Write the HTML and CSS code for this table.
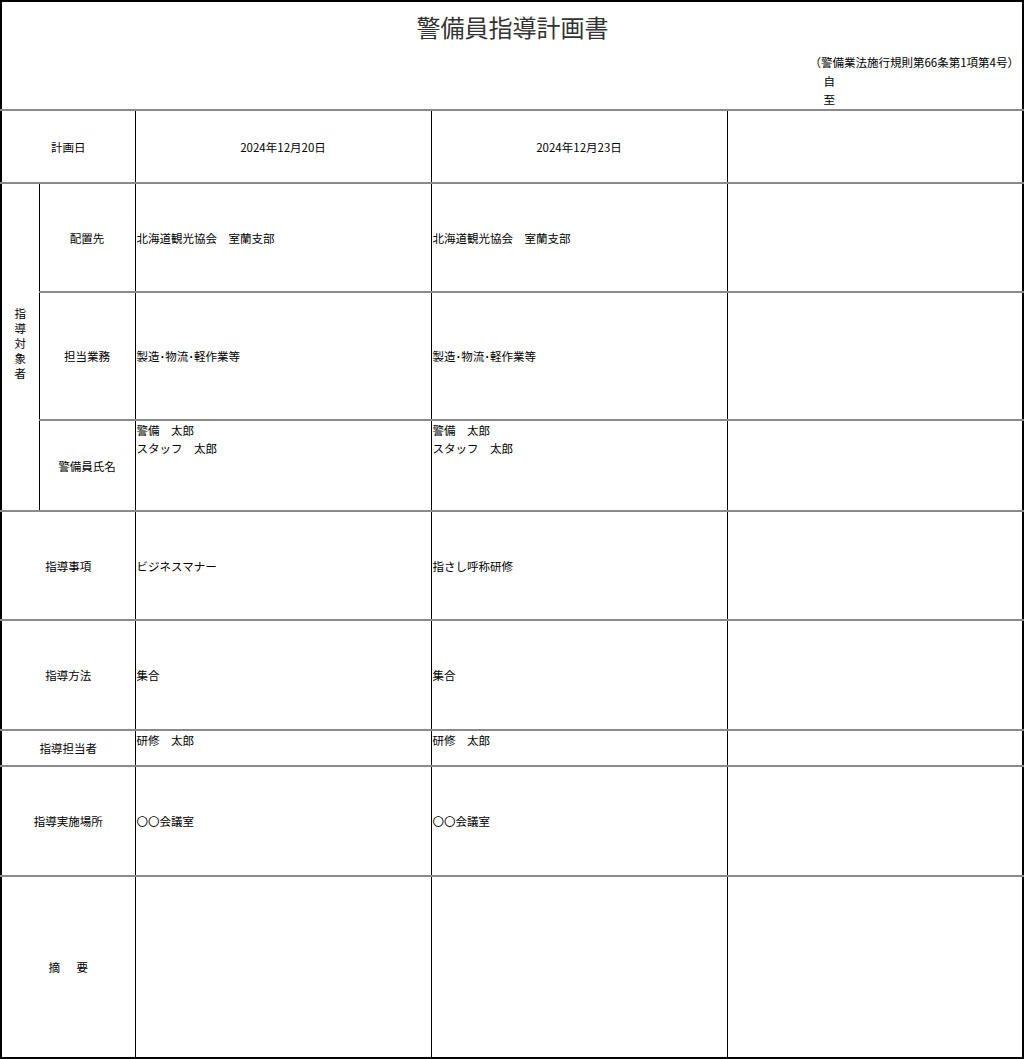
FILE: index.html
```html
<!DOCTYPE html>
<html lang="ja">
<head>
<meta charset="utf-8">
<title>警備員指導計画書</title>
<link rel="stylesheet" href="styles.css">
</head>
<body>
<table class="sheet">
  <colgroup>
    <col class="c-group">
    <col class="c-label">
    <col class="c-data">
    <col class="c-data">
    <col class="c-data">
  </colgroup>
  <tr class="r-head">
    <td colspan="5" class="head">
      <div class="title">警備員指導計画書</div>
      <div class="note-wrap">
        <div class="note">
          <div class="law">（警備業法施行規則第66条第1項第4号）</div>
          <div class="period">自</div>
          <div class="period last">至</div>
        </div>
      </div>
    </td>
  </tr>
  <tr class="r-date">
    <td colspan="2" class="label">計画日</td>
    <td class="center">2024年12月20日</td>
    <td class="center">2024年12月23日</td>
    <td></td>
  </tr>
  <tr class="r-place">
    <td rowspan="3" class="group"><span class="vert">指導対象者</span></td>
    <td class="label">配置先</td>
    <td>北海道観光協会　室蘭支部</td>
    <td>北海道観光協会　室蘭支部</td>
    <td></td>
  </tr>
  <tr class="r-duty">
    <td class="label">担当業務</td>
    <td>製造･物流･軽作業等</td>
    <td>製造･物流･軽作業等</td>
    <td></td>
  </tr>
  <tr class="r-names">
    <td class="label">警備員氏名</td>
    <td class="top">警備　太郎<br>スタッフ　太郎</td>
    <td class="top">警備　太郎<br>スタッフ　太郎</td>
    <td></td>
  </tr>
  <tr class="r-item">
    <td colspan="2" class="label">指導事項</td>
    <td>ビジネスマナー</td>
    <td>指さし呼称研修</td>
    <td></td>
  </tr>
  <tr class="r-method">
    <td colspan="2" class="label">指導方法</td>
    <td>集合</td>
    <td>集合</td>
    <td></td>
  </tr>
  <tr class="r-staff">
    <td colspan="2" class="label">指導担当者</td>
    <td class="top">研修　太郎</td>
    <td class="top">研修　太郎</td>
    <td></td>
  </tr>
  <tr class="r-venue">
    <td colspan="2" class="label">指導実施場所</td>
    <td>〇〇会議室</td>
    <td>〇〇会議室</td>
    <td></td>
  </tr>
  <tr class="r-memo">
    <td colspan="2" class="label">摘 　 要</td>
    <td></td>
    <td></td>
    <td></td>
  </tr>
</table>
</body>
</html>
```
FILE: styles.css
```css
html, body {
  margin: 0;
  padding: 0;
  background: #fff;
}
body {
  font-family: "Noto Sans CJK JP", "Liberation Sans", sans-serif;
  font-size: 11.5px;
  color: #000;
}
.sheet {
  border-collapse: collapse;
  table-layout: fixed;
  width: 1023px;
  border: 2px solid #000;
}
.c-group { width: 38px; }
.c-label { width: 96px; }
.c-data { width: 296px; }
.sheet td {
  border-left: 1px solid #000;
  border-right: 1px solid #000;
  border-top: 2px solid #8a8a8a;
  border-bottom: 2px solid #8a8a8a;
  padding: 0 0 0 1px;
  vertical-align: middle;
  line-height: 18px;
  white-space: nowrap;
}
.sheet td.label,
.sheet td.center {
  text-align: center;
  padding: 0;
}
.sheet td.top {
  vertical-align: top;
}
.sheet td.group {
  text-align: center;
  padding: 0;
}
.vert {
  writing-mode: vertical-rl;
  text-orientation: upright;
  line-height: 12px;
  letter-spacing: 3.5px;
}
.head {
  height: 107px;
  vertical-align: top !important;
  padding: 0 !important;
  border-top: 2px solid #000 !important;
}
.title {
  text-align: center;
  font-size: 24px;
  color: #333;
  line-height: 28px;
  padding-top: 11px;
  padding-left: 1px;
}
.note-wrap {
  display: flex;
  justify-content: flex-end;
  padding-top: 12px;
  padding-right: 3px;
}
.note {
  font-size: 11.5px;
}
.law {
  line-height: 19px;
}
.period {
  padding-left: 14px;
  line-height: 19px;
}
.period.last {
  line-height: 16px;
}
.r-date td { height: 71px; }
.r-place td { height: 107px; }
.r-duty td { height: 126px; }
.r-names td { height: 89px; }
.r-item td { height: 107px; }
.r-method td { height: 108px; }
.r-staff td { height: 34px; }
.r-venue td { height: 108px; }
.r-memo td { height: 180px; border-bottom: 2px solid #000; }
```
